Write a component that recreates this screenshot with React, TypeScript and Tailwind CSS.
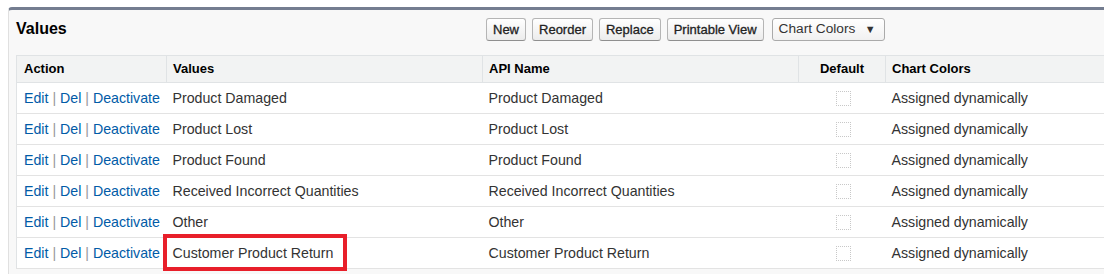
import React from 'react'

const rows = [
  'Product Damaged',
  'Product Lost',
  'Product Found',
  'Received Incorrect Quantities',
  'Other',
  'Customer Product Return',
]

const font = { fontFamily: '"Liberation Sans", Arial, sans-serif' }

function Btn({ label }: { label: string }) {
  return (
    <button className="h-[23px] px-[6px] rounded-[3px] border border-[#b5b5b5] border-b-[#8f8f8f] bg-linear-to-b from-white to-[#ececec] text-[13px] text-[#222] [-webkit-text-stroke:0.3px_#222]">
      {label}
    </button>
  )
}

export default function App() {
  return (
    <div className="w-[1104px] h-[274px] overflow-hidden bg-white pt-[7px] pl-[8px]" style={font}>
      {/* Panel */}
      <div className="w-[1120px] h-[300px] bg-[#f8f8f8] border-t-[3px] border-t-[#747d90] border-l border-l-[#e0e0e0] rounded-tl-[4px]">
        {/* Panel header */}
        <div className="flex items-center h-[45px]">
          <div className="w-[477px] pl-[7px] pb-[7px] text-[16px] font-bold text-black">Values</div>
          <div className="flex items-center gap-[6px] pb-[6px]">
            <Btn label="New" />
            <Btn label="Reorder" />
            <Btn label="Replace" />
            <Btn label="Printable View" />
            <div className="ml-[2px] h-[23px] w-[113px] flex items-center justify-between pl-[6px] pr-[8px] rounded-[3px] border border-[#aaaaaa] bg-linear-to-b from-white to-[#f1f1f1] text-[13.7px] text-[#333]">
              <span>Chart Colors</span>
              <span className="text-[11px] text-[#333]">▼</span>
            </div>
          </div>
        </div>

        {/* Table */}
        <div className="relative ml-[7px]">
          <table className="table-fixed border-collapse w-[1120px] bg-white border-l border-[#e0e3e5]">
            <colgroup>
              <col className="w-[150px]" />
              <col className="w-[316px]" />
              <col className="w-[316px]" />
              <col className="w-[87px]" />
              <col />
            </colgroup>
            <thead>
              <tr className="h-[27px] bg-[#f2f3f3] text-[13px] font-bold text-black">
                <th className="text-left font-bold pl-[7px] border-t border-b border-[#e0e3e5]">Action</th>
                <th className="text-left font-bold pl-[6px] border border-[#e0e3e5]">Values</th>
                <th className="text-left font-bold pl-[6px] border border-[#e0e3e5]">API Name</th>
                <th className="text-center font-bold border border-[#e0e3e5]">Default</th>
                <th className="text-left font-bold pl-[6px] border-t border-b border-[#e0e3e5]">Chart Colors</th>
              </tr>
            </thead>
            <tbody>
              {rows.map((r) => (
                <tr key={r} className="h-[31px] border-b border-[#e3e3e3] text-[14.2px] text-[#333]">
                  <td className="pl-[7px] pt-[2px] whitespace-nowrap">
                    <a className="text-[#015ba7]">Edit</a>
                    <span className="text-[#999]"> | </span>
                    <a className="text-[#015ba7]">Del</a>
                    <span className="text-[#999]"> | </span>
                    <a className="text-[#015ba7]">Deactivate</a>
                  </td>
                  <td className="pl-[6px] pt-[1px] whitespace-nowrap">{r}</td>
                  <td className="pl-[6px] pt-[1px] whitespace-nowrap">{r}</td>
                  <td>
                    <div className="ml-[37px] w-[15px] h-[15px] border border-dotted border-[#c8c8c8]" />
                  </td>
                  <td className="pl-[6px] pt-[1px] whitespace-nowrap">Assigned dynamically</td>
                </tr>
              ))}
            </tbody>
          </table>

          {/* Highlight box */}
          <div className="absolute left-[147px] top-[179px] w-[184px] h-[37px] border-4 border-[#e81f2a]" />
        </div>
      </div>
    </div>
  )
}
